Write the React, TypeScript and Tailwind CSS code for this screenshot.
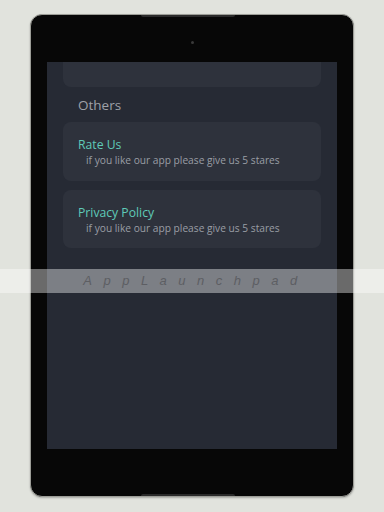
const cards = [
  { title: 'Rate Us', sub: 'if you like our app please give us 5 stares', h: 'h-[59px]' },
  { title: 'Privacy Policy', sub: 'if you like our app please give us 5 stares', h: 'h-[58px]' },
];

function SettingCard({ title, sub, h }: { title: string; sub: string; h: string }) {
  return (
    <div className={`${h} rounded-[8px] bg-[#2e323c] pl-[15px] pt-[15px]`}>
      <p className="text-[12.2px] leading-[16px] text-[#5fcab8]">{title}</p>
      <p className="pl-2 text-[10.2px] leading-[14px] text-[#9a9ea5]">{sub}</p>
    </div>
  );
}

export default function App() {
  return (
    <div
      className="relative h-[512px] w-[384px] overflow-hidden bg-[#e1e3dd] pl-[30px] pt-[14px]"
      style={{ fontFamily: '"Open Sans", "Noto Sans", sans-serif' }}
    >
      {/* tablet */}
      <div className="flex h-[483px] w-[324px] flex-col rounded-[12px] border border-[#9c9d97] bg-[#070707] px-4 shadow-[0_1px_2px_rgba(0,0,0,0.25)]">
        <div className="flex h-[47px] flex-col items-center">
          <div className="ml-[-8px] h-[2px] w-[94px] rounded-b bg-[#2a2a2a]" />
          <div className="mt-[24px] h-[3px] w-[3px] rounded-full bg-[#3a3a3a]" />
        </div>

        {/* screen */}
        <div className="flex h-[387px] flex-col overflow-hidden bg-[#262a34] px-4">
          <div className="h-[25px] shrink-0 rounded-b-[8px] bg-[#2e323c]" />
          <p className="mt-[9px] pl-[15px] text-[13.5px] leading-[18px] text-[#9ea1a8]">Others</p>
          <div className="mt-[8px] flex flex-col gap-[9px]">
            {cards.map((c) => (
              <SettingCard key={c.title} {...c} />
            ))}
          </div>
        </div>

        <div className="flex flex-1 flex-col items-center justify-end">
          <div className="ml-[-8px] h-[2px] w-[94px] rounded-t bg-[#2a2a2a]" />
        </div>
      </div>

      {/* watermark band */}
      <div className="absolute left-0 top-[269px] flex h-[24px] w-full items-center justify-center bg-white/40">
        <span
          className="pl-[8px] text-[13px] italic tracking-[11.5px] text-[#5d5e63]"
          style={{ fontFamily: '"Liberation Sans", Arial, sans-serif' }}
        >
          AppLaunchpad
        </span>
      </div>
    </div>
  );
}
